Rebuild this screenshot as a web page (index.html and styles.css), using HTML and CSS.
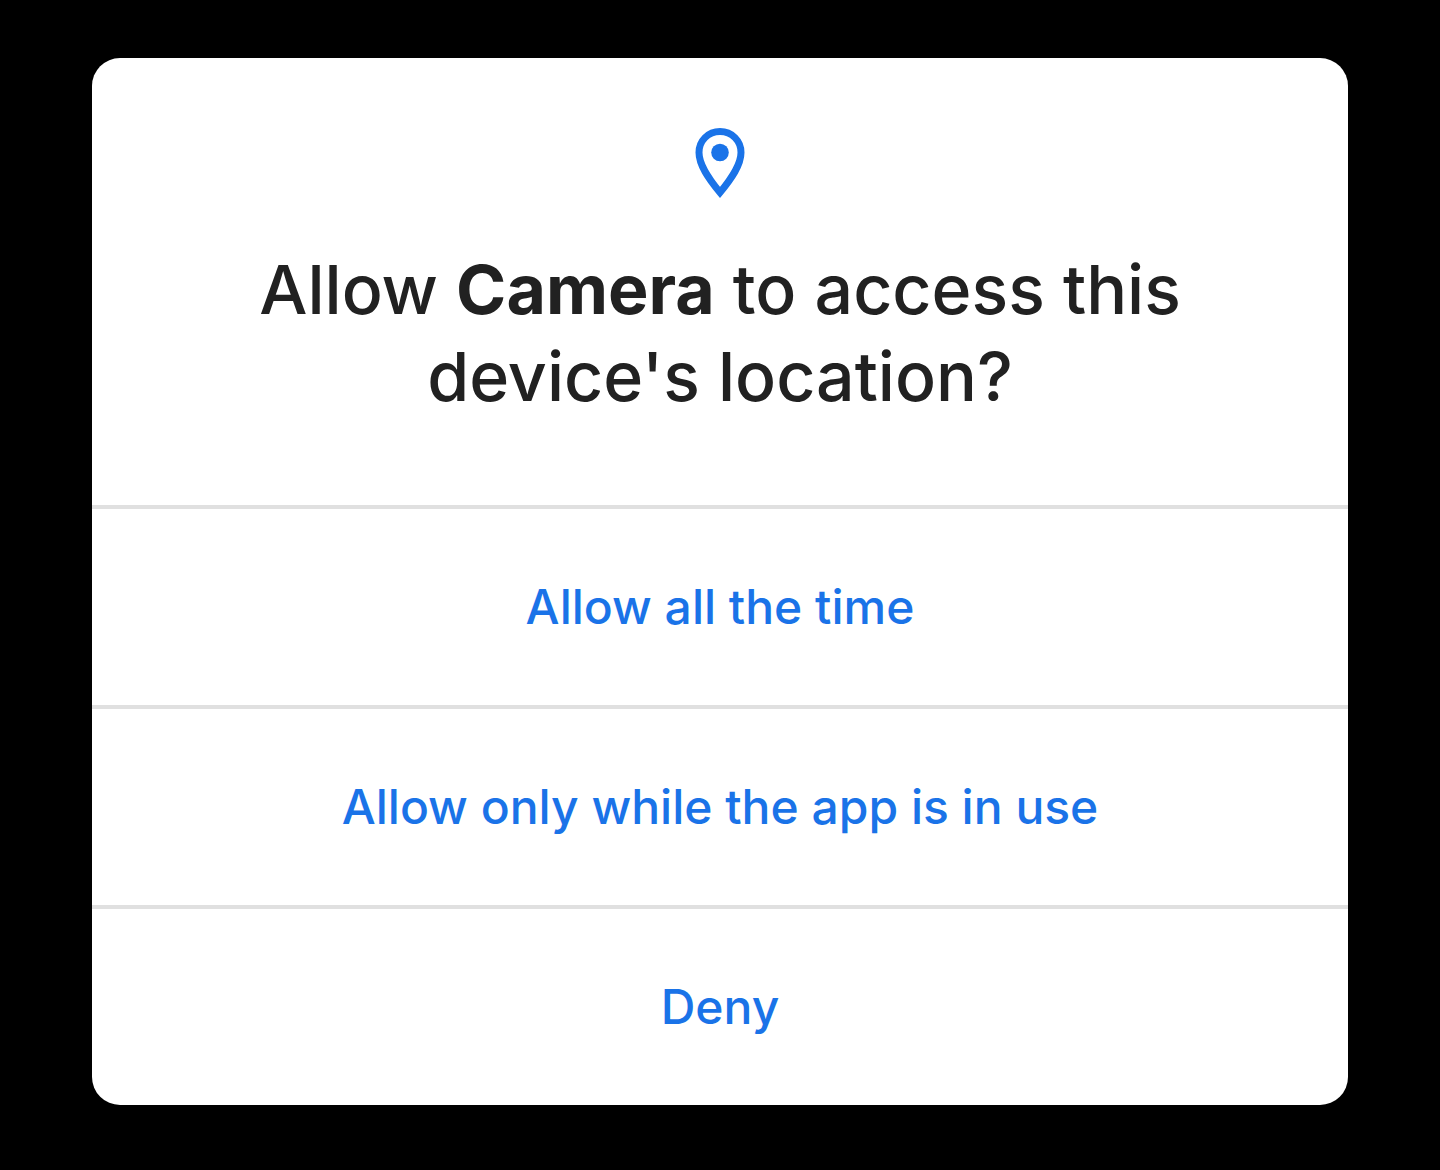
FILE: index.html
```html
<!DOCTYPE html>
<html lang="en">
<head>
<meta charset="utf-8">
<meta name="viewport" content="width=device-width, initial-scale=1">
<title>Location permission</title>
<link rel="stylesheet" href="styles.css">
</head>
<body>
<main class="dialog" role="dialog" aria-labelledby="dialog-title">
  <header class="dialog-header">
    <svg class="pin" viewBox="0 0 50 70" aria-hidden="true">
      <path d="M25 3.5C13.100 3.500 4 12.900 4 24.500C4 37 13.500 50.500 25 64.500C36.500 50.500 46 37 46 24.500C46 12.900 36.900 3.500 25 3.500Z" fill="none" stroke="currentColor" stroke-width="7"/>
      <circle cx="25" cy="24.500" r="8.800" fill="currentColor"/>
    </svg>
    <h1 class="title" id="dialog-title">Allow <strong>Camera</strong> to access this<br>device's location?</h1>
  </header>
  <button class="action" type="button">Allow all the time</button>
  <button class="action" type="button">Allow only while the app is in use</button>
  <button class="action" type="button">Deny</button>
</main>
</body>
</html>
```

FILE: styles.css
```css
* {
  box-sizing: border-box;
}

body {
  margin: 0;
  padding: 58px 92px 65px;
  background: #000;
  font-family: "Google Sans", "Product Sans", Inter, sans-serif;
}

.dialog {
  display: flex;
  flex-direction: column;
  overflow: hidden;
  border-radius: 28px;
  background: #fff;
}

.dialog-header {
  display: flex;
  flex-direction: column;
  align-items: center;
  gap: 48px;
  padding: 70px 40px 85px;
}

.pin {
  width: 50px;
  height: 70px;
  color: #1a73e8;
}

.title {
  margin: 0;
  color: #212121;
  font-size: 68px;
  font-weight: 500;
  line-height: 87px;
  text-align: center;
}

.title strong {
  font-weight: 700;
}

.action {
  height: 200px;
  padding: 0 40px;
  border: 0;
  border-top: 4px solid #e0e0e0;
  background: none;
  color: #1a73e8;
  font-family: inherit;
  font-size: 48px;
  font-weight: 500;
  line-height: 60px;
  cursor: pointer;
}
```
